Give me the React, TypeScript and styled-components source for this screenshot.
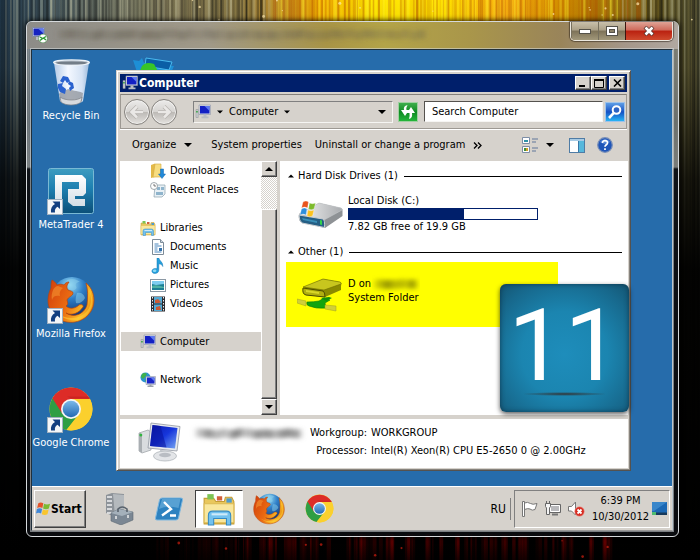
import React from "react";
import styled, { createGlobalStyle, css } from "styled-components";

const FACE = "#d6d2cc";
const NAVY = "#001f6b";
const DESKTOP = "#266cab";
const UI_FONT = '"DejaVu Sans Condensed", "Noto Sans", sans-serif';

const GlobalStyle = createGlobalStyle`
  *, *::before, *::after { box-sizing: border-box; }
  body { margin: 0; background: #000; font-family: ${UI_FONT}; font-size: 11px; line-height: 14px; color: #000; }
  button, input { font: inherit; color: inherit; }
  button { padding: 0; cursor: pointer; }
  a { color: inherit; text-decoration: none; }
  svg { display: block; flex: none; }
`;

const raised = css`
  border: 1px solid;
  border-color: #fff #404040 #404040 #fff;
  box-shadow: inset -1px -1px 0 #808080;
  background: ${FACE};
`;

/* ---------- wallpaper ---------- */

const WallpaperSvg = styled.svg`
  position: absolute;
  inset: 0;
  width: 100%;
  height: 100%;
`;

const noise = (n: number) => {
  const v = Math.sin(n * 127.1 + 11.7) * 43758.5453;
  return v - Math.floor(v);
};

function Wallpaper() {
  const stripes = Array.from({ length: 350 }, (_, i) => ({
    x: i * 2 + noise(i) * 2,
    w: 1 + noise(i + 900) * 2,
    dark: noise(i + 400) > 0.42,
    o: 0.08 + noise(i + 70) * 0.34,
  }));
  const glow = Array.from({ length: 130 }, (_, i) => ({
    x: 150 + noise(i + 5) * 460,
    w: 1 + noise(i + 30) * 4,
    o: 0.1 + noise(i + 60) * 0.35,
  }));
  const sparks = Array.from({ length: 26 }, (_, i) => ({
    x: 150 + noise(i + 200) * 545,
    y: i % 3 ? noise(i + 300) * 20 : 537 + noise(i + 310) * 20,
    r: 0.6 + noise(i + 320),
  }));
  return (
    <WallpaperSvg viewBox="0 0 700 560" preserveAspectRatio="none" aria-hidden="true">
      <defs>
        <linearGradient id="sky" x1="0" x2="1">
          <stop offset="0" stopColor="#1f3445" />
          <stop offset=".05" stopColor="#3d5360" />
          <stop offset=".13" stopColor="#5d665f" />
          <stop offset=".25" stopColor="#857b56" />
          <stop offset=".34" stopColor="#8b7a45" />
          <stop offset=".41" stopColor="#c48b1c" />
          <stop offset=".46" stopColor="#f5b400" />
          <stop offset=".53" stopColor="#ffe800" />
          <stop offset=".64" stopColor="#ffdf00" />
          <stop offset=".72" stopColor="#f8ae10" />
          <stop offset=".8" stopColor="#d89600" />
          <stop offset=".88" stopColor="#98700c" />
          <stop offset=".95" stopColor="#5f5522" />
          <stop offset="1" stopColor="#5a5738" />
        </linearGradient>
        <linearGradient id="night" x1="0" x2="0" y1="0" y2="1">
          <stop offset="0" stopOpacity="0" />
          <stop offset=".12" stopOpacity=".12" />
          <stop offset=".32" stopOpacity=".75" />
          <stop offset=".48" stopOpacity=".96" />
          <stop offset="1" stopOpacity="1" />
        </linearGradient>
        <linearGradient id="ember" x1="0" x2="0" y1="0" y2="1">
          <stop offset="0" stopColor="#a80000" />
          <stop offset="1" stopColor="#300000" />
        </linearGradient>
      </defs>
      <rect width="700" height="560" fill="url(#sky)" />
      {stripes.map((s, i) => (
        <rect
          key={i}
          x={s.x}
          width={s.w}
          height="560"
          opacity={s.o}
          fill={s.dark ? (s.x > 270 && s.x < 640 ? "#b04c00" : "#0a0c0c") : s.x > 270 && s.x < 620 ? "#ffef30" : "#c8c8a8"}
        />
      ))}
      <rect width="700" height="560" fill="url(#night)" />
      {glow.map((s, i) => (
        <rect key={i} x={s.x} y="534" width={s.w} height="26" opacity={s.o * (s.x < 230 ? 0.35 : 0.85)} fill="url(#ember)" />
      ))}
      {sparks.map((s, i) => (
        <circle key={i} cx={s.x} cy={s.y} r={s.r} fill={s.y > 100 ? "#d02010" : "#ffe9b0"} opacity=".7" />
      ))}
    </WallpaperSvg>
  );
}

/* ---------- shared artwork ---------- */

type IconProps = { size?: number };

function MonitorIcon({ size = 16 }: IconProps) {
  return (
    <svg width={size} height={size} viewBox="0 0 16 16" aria-hidden="true">
      <path d="M1 5.500h2.200v8H1z" fill="#c9cdd0" stroke="#8b8f92" strokeWidth=".5" />
      <path d="M1.200 7h1.500v1.500H1.200z" fill="#2fa23a" />
      <path d="M4 1h11.500v9.500H4z" fill="#d7dbe2" stroke="#8e96a8" strokeWidth=".6" />
      <path d="M5 2h9.500v7.500H5z" fill="#1320c4" />
      <path d="M9.500 2h5v5z" fill="#5c78f0" />
      <path d="M8.500 10.500h3v2h2v1.800h-7v-1.800h2z" fill="#b8bcc4" />
    </svg>
  );
}

function BigMonitorIcon() {
  return (
    <svg width="44" height="42" viewBox="0 0 44 42" aria-hidden="true">
      <defs>
        <linearGradient id="screen" x1="0" x2="1" y1="0" y2="1">
          <stop offset="0" stopColor="#0b18a8" />
          <stop offset=".5" stopColor="#1636dc" />
          <stop offset="1" stopColor="#79a7f2" />
        </linearGradient>
      </defs>
      <path d="M1 11l9-3 3 2v18l-9 3-3-2z" fill="#d9dcdf" stroke="#9a9fa3" strokeWidth=".7" />
      <path d="M1 11l3 1v19l-3-2z" fill="#a9aeb2" />
      <circle cx="2.800" cy="13" r="1.500" fill="#31b440" />
      <path d="M13 1l29 3.500L39 29 10 26z" fill="#e8eaed" stroke="#9298a2" strokeWidth=".8" />
      <path d="M14.500 3l25 3-2.500 20.500L12 24z" fill="url(#screen)" />
      <path d="M14.500 3l8 1 6 21.500L12 24z" fill="#08129a" opacity=".55" />
      <path d="M22 28l8 1-1 5h-6z" fill="#bfc3c8" />
      <ellipse cx="27" cy="34" rx="11.500" ry="5" fill="#e3e5e8" stroke="#a8adb3" strokeWidth=".7" />
      <ellipse cx="27" cy="33" rx="6" ry="2.200" fill="#b9bdc3" />
    </svg>
  );
}

function FirefoxIcon({ size = 48 }: IconProps) {
  return (
    <svg width={size} height={size} viewBox="0 0 48 48" aria-hidden="true">
      <defs>
        <radialGradient id="globe" cx=".45" cy=".2" r=".85">
          <stop offset="0" stopColor="#9be0f6" />
          <stop offset=".4" stopColor="#2f7fc8" />
          <stop offset="1" stopColor="#0b2a68" />
        </radialGradient>
        <linearGradient id="fox" x1="0" x2="1" y1=".1" y2=".5">
          <stop offset="0" stopColor="#d2400c" />
          <stop offset=".5" stopColor="#ea6a12" />
          <stop offset=".85" stopColor="#fab825" />
          <stop offset="1" stopColor="#e88a12" />
        </linearGradient>
      </defs>
      <circle cx="25" cy="21" r="20" fill="url(#globe)" />
      <path d="M20 4c5-2 9-1 13 2-3 0-5 2-4 4 2 3-2 5-5 4-3-2-6-4-4-10zM30 17c4-1 7 1 8 5-2 4-6 6-9 5-1-4 0-7 1-10z" fill="#8bd0ec" opacity=".5" />
      <path d="M39 7c9 7 11 22 3 31-8 10-24 11-33 3C0 34-1 22 4 12c0-3 0-5 1-8 2 1 4 3 5 5 2-1 5-1 7 0 1-2 3-3 5-3-2 3-3 5-1 8 2 1 5 1 5 3 0 3-5 4-6 7 1 3 1 5-1 6 4 4 10 2 13-1 2-1 5 0 4 2-4 6-11 9-17 6 7 5 18 2 21-8 1-8 1-15-1-22z" fill="url(#fox)" stroke="#b8430c" strokeWidth=".7" />
      <path d="M41 12c5 9 4 20-4 26-8 6-19 5-27-1 9 9 24 10 31 1 7-8 5-19 0-26z" fill="#ffd93e" opacity=".5" />
      <path d="M6 14c1-2 3-4 5-4l5 2c-3 2-4 5-3 8-4-1-7 0-8 4-1-4 0-7 1-10z" fill="#f18a2c" opacity=".7" />
    </svg>
  );
}

function ChromeIcon({ size = 48 }: IconProps) {
  return (
    <svg width={size} height={size} viewBox="0 0 48 48" aria-hidden="true">
      <defs>
        <linearGradient id="hub" x1="0" x2="0" y1="0" y2="1">
          <stop offset="0" stopColor="#7bb9e9" />
          <stop offset="1" stopColor="#2168b4" />
        </linearGradient>
      </defs>
      <circle cx="24" cy="24" r="21.500" fill="#fbd22f" />
      <path d="M24 24L5.400 13.300A21.500 21.500 0 0 0 19.500 45l12-15.500z" fill="#2f9e44" />
      <path d="M24 14h19A21.500 21.500 0 0 0 5.400 13.300L15.500 29z" fill="#dd2c27" />
      <path d="M43 14H24l8.500 15-13 16A21.500 21.500 0 0 0 43 14z" fill="#fbd02d" />
      <path d="M24 13.500h19l-1-2H20z" fill="#a81616" opacity=".35" />
      <circle cx="24" cy="24" r="10" fill="#f6f6f6" />
      <circle cx="24" cy="24" r="8.300" fill="url(#hub)" />
    </svg>
  );
}

function RecycleBinIcon() {
  return (
    <svg width="48" height="48" viewBox="0 0 48 48" aria-hidden="true">
      <defs>
        <linearGradient id="bin" x1="0" x2="1">
          <stop offset="0" stopColor="#b4cae6" />
          <stop offset=".4" stopColor="#f4f8ff" />
          <stop offset=".8" stopColor="#d4e2f4" />
          <stop offset="1" stopColor="#9dbbdc" />
        </linearGradient>
      </defs>
      <path d="M7 5h35l-6 38c-3 4-19 4-23 0z" fill="url(#bin)" />
      <path d="M12 36c3-4 6-3 9-5 4 2 8 1 15 4l-1 8c-4 3-17 3-21 0z" fill="#8f9399" opacity=".75" />
      <path d="M13 39c5 4 18 4 22 0l-1 5c-4 4-16 4-20 0z" fill="#d8dadd" stroke="#7c8085" strokeWidth=".7" />
      <ellipse cx="24.500" cy="4.500" rx="17.800" ry="2.600" fill="#b4bdc7" stroke="#edf2f7" strokeWidth="1.400" />
      <ellipse cx="24.500" cy="5" rx="15.500" ry="1.600" fill="#737d88" />
      <g fill="#2a62cf">
        <path d="M13 23l3-5 5 1 2 4-3 2-2-3-2 3z" />
        <path d="M22 23l4 2 1 5-4 3-1-3 2-2-3-2z" />
        <path d="M11 26l5-1-1 3 4 3-1 5-5-2-2-4z" />
      </g>
    </svg>
  );
}

function MetaTraderIcon() {
  return (
    <svg width="48" height="48" viewBox="0 0 48 48" aria-hidden="true">
      <defs>
        <linearGradient id="mt" x1="0" x2="0" y1="0" y2="1">
          <stop offset="0" stopColor="#3e9cc0" />
          <stop offset=".45" stopColor="#1d7fb0" />
          <stop offset="1" stopColor="#0b4f78" />
        </linearGradient>
        <linearGradient id="mtMark" x1="0" x2="0" y1="0" y2="1">
          <stop offset="0" stopColor="#fff" />
          <stop offset="1" stopColor="#d2dde4" />
        </linearGradient>
      </defs>
      <rect x="1.500" y="1.500" width="45" height="45" rx="2" fill="url(#mt)" stroke="#79b9d4" />
      <path d="M8 8h27l4 4v14l-3 3h-8v3h10v7H26l-5-4V22h11v-7H15v25H8z" fill="url(#mtMark)" />
    </svg>
  );
}

const ShortcutSvg = styled.svg`
  position: absolute;
  left: 0;
  bottom: 0;
`;

function ShortcutArrow() {
  return (
    <ShortcutSvg width="16" height="16" viewBox="0 0 16 16" aria-hidden="true">
      <rect x=".5" y=".5" width="15" height="15" fill="#f4f6f8" stroke="#9fb0c0" />
      <path d="M5.500 2.500H13V10l-2.500-2.300c-2 1-3 3-2.500 5.800H4c-.5-4 .8-6.800 4-8.500z" fill="#123f80" />
    </ShortcutSvg>
  );
}

function HardDiskIcon() {
  return (
    <svg width="48" height="32" viewBox="0 0 48 32" aria-hidden="true">
      <defs>
        <linearGradient id="disk" x1="0" x2="1">
          <stop offset="0" stopColor="#f4f4f4" />
          <stop offset="1" stopColor="#a9acaf" />
        </linearGradient>
      </defs>
      <path d="M2 16L22 5l22 5q2 1 1.500 3v5L28 30 4 24q-3-2-2-8z" fill="#8e9295" />
      <path d="M2 16L22 5l22 5q2 1 1 2L27 22z" fill="url(#disk)" stroke="#c5c8ca" strokeWidth=".6" />
      <path d="M2 17l24 4q2 1 1.500 8.500L5 25q-3-2-3-8z" fill="#255f85" stroke="#c8ccd0" />
      <path d="M5 20l15 3v2L6 22z" fill="#3a90b8" />
      <path d="M23 22l2 .5v4.500l-2-.5z" fill="#34d24a" />
      <g stroke="#fff" strokeWidth=".3">
        <path d="M6 4q3-2 5.500 0l-1 6q-3-2-6 0z" fill="#e8541e" />
        <path d="M12.500 5q3 1.500 6 0L17 11q-3 1.500-5.500 0z" fill="#7dbb2c" />
        <path d="M4.500 11q3-2 5.500 0l-1 6q-3-2-6 0z" fill="#2d8fdc" />
        <path d="M11 12q3 1.500 6 0l-1.500 6q-3 1.500-5.500 0z" fill="#fbc21f" />
      </g>
    </svg>
  );
}

function NetworkDriveIcon() {
  return (
    <svg width="48" height="36" viewBox="0 0 48 36" aria-hidden="true">
      <path d="M6 11L26 2l17 3q2 1 1 4v4L28 20 8 18q-3-2-2-7z" fill="#8b8a00" />
      <path d="M6 10L26 2l17 3q2 1 1 2L27 13z" fill="#c8c61e" stroke="#6e6d00" strokeWidth=".6" />
      <path d="M6 11l20 3q2 1 2 6L9 18q-4-1-3-7z" fill="#b0af10" stroke="#4e4d00" strokeWidth="1" />
      <path d="M9 13l13 2v2L9 15z" fill="#d9d728" />
      <path d="M0 22l9 2v5l-9-3z" fill="#d0cf3a" stroke="#a3a21c" strokeWidth=".5" />
      <path d="M10 25q7 0 12-1l5-3 6 2-5 3 1 5q-10 1-17-2-3-1-2-4z" fill="#12a40e" stroke="#0a7d08" strokeWidth=".6" />
      <path d="M24 21l8-1 3 1-6 3z" fill="#0f8f0b" />
      <path d="M28 28l11 1v5l-11-2z" fill="#d0cf3a" stroke="#a3a21c" strokeWidth=".5" />
    </svg>
  );
}

function FolderLibIcon({ size = 16 }: IconProps) {
  return (
    <svg width={size} height={size} viewBox="0 0 32 32" aria-hidden="true">
      <path d="M2 6h9l2 3h8l1-4h6l2 4v21H2z" fill="#e9c75c" stroke="#c49c35" />
      <path d="M5 2h6v5H5z" fill="#7dc454" />
      <path d="M14 4h5v4h-5z" fill="#d2603c" />
      <path d="M23 6h5v4h-5z" fill="#4f9bcb" />
      <path d="M2 11h28v18H2z" fill="#f9e79e" stroke="#dcb952" />
      <path d="M6 22q0-4 4-4h13q4 0 4 4v9h-4v-6H11v6H6z" fill="#72c1ee" stroke="#358ac4" />
      <path d="M9 20h15v2H9z" fill="#cdeafa" />
    </svg>
  );
}

function DownloadsIcon() {
  return (
    <svg width="16" height="16" viewBox="0 0 16 16" aria-hidden="true">
      <path d="M1 2l4-1.500V14l-4 1z" fill="#e2b94a" />
      <path d="M5 1h6v13H3z" fill="#f7dd80" stroke="#d3a83c" strokeWidth=".6" />
      <path d="M10.500 6h3v5h2L12 15.500 8.500 11h2z" fill="#2189d8" stroke="#0f65b0" strokeWidth=".5" />
    </svg>
  );
}

function RecentIcon() {
  return (
    <svg width="16" height="16" viewBox="0 0 16 16" aria-hidden="true">
      <path d="M5 3h10v9l-3 3H4z" fill="#e8f0f5" stroke="#8ba0ad" strokeWidth=".7" />
      <path d="M7 5h3v3H7zM11 5h3v3h-3zM6 10h7v3H6z" fill="#8fb4cc" />
      <circle cx="4" cy="4" r="3.500" fill="#fff" stroke="#8b959c" strokeWidth=".8" />
      <path d="M4 2v2h2" fill="none" stroke="#444" strokeWidth=".7" />
    </svg>
  );
}

function DocumentIcon() {
  return (
    <svg width="16" height="16" viewBox="0 0 16 16" aria-hidden="true">
      <path d="M2.500.5h8l3 3v12h-11z" fill="#fff" stroke="#7e8c99" />
      <path d="M4.500 5h4M4.500 7h7M4.500 9h3M4.500 11h3M4.500 13h7" stroke="#4a86bd" />
      <path d="M9 9h3v3H9z" fill="#3572ab" />
      <path d="M10.500.5v3h3" fill="#cbd8e2" stroke="#7e8c99" />
    </svg>
  );
}

function MusicIcon() {
  return (
    <svg width="16" height="16" viewBox="0 0 16 16" aria-hidden="true">
      <path d="M7 0h1.800c.5 3 4.500 4 4 8.500-.8-1.800-2-2.500-4-2.700V12c0 2.500-2 3.500-4 3.500S1.500 14 2 12.500C2.700 10.500 5 10 7 10.800z" fill="#24a0dc" stroke="#1274b4" strokeWidth=".5" />
      <ellipse cx="4.600" cy="12.700" rx="1.800" ry="1.200" fill="#8cdaf6" />
    </svg>
  );
}

function PictureIcon() {
  return (
    <svg width="16" height="16" viewBox="0 0 16 16" aria-hidden="true">
      <rect x=".5" y="2.500" width="15" height="12" fill="#fff" stroke="#8b98a4" />
      <path d="M2 4h12v4H2z" fill="#7fcdf0" />
      <path d="M2 7l4 1 8-1v6H2z" fill="#1c7f96" />
      <path d="M2 9q4-2 12 1v1H2z" fill="#4fb1a5" />
    </svg>
  );
}

function VideoIcon() {
  return (
    <svg width="16" height="16" viewBox="0 0 16 16" aria-hidden="true">
      <rect x="1" y=".5" width="14" height="15" fill="#2b2b30" />
      <path d="M4 1h8v6.500H4zM4 8.500h8V15H4z" fill="#53a9d4" />
      <path d="M5 4l3-1 3 3-2 1H5zM6 11l4-1 1 4H6z" fill="#cc5a34" />
      <path d="M2.500 1v14M13.500 1v14" stroke="#eee" strokeDasharray="1.500 1.500" />
    </svg>
  );
}

function NetworkIcon() {
  return (
    <svg width="16" height="16" viewBox="0 0 16 16" aria-hidden="true">
      <circle cx="5.500" cy="5.500" r="5" fill="#2b93d0" />
      <path d="M2 2q3-2 5 0L5 5 3 7 1 5zM5 8l3-1v3H6z" fill="#3fb24a" />
      <path d="M6 4.500h9.500v8H6z" fill="#d7dbe2" stroke="#8089a0" strokeWidth=".5" />
      <path d="M7 5.500h7.500v6H7z" fill="#1a26c8" />
      <path d="M10.500 5.500h4v4z" fill="#5f7bf0" />
      <path d="M9.500 12.500h2v1h2V15h-6v-1.500h2z" fill="#9ca2ac" />
    </svg>
  );
}

function WindowsFlag({ size = 16 }: IconProps) {
  return (
    <svg width={size} height={size} viewBox="0 0 16 16" aria-hidden="true">
      <path d="M2.500 2.500Q5 .8 7.800 2.500L6.800 7.500Q4 5.900 1.200 7.500z" fill="#e5532a" />
      <path d="M8.600 3q3 1.700 6.400 0l-1.300 5q-3 1.700-6.200 0z" fill="#7cba33" />
      <path d="M1 8.400q2.800-1.600 5.600 0l-1.200 5Q2.800 11.700 0 13.400z" fill="#3d86d8" />
      <path d="M7.300 9q3.200 1.700 6.200 0l-1.300 5q-3 1.700-6 0z" fill="#f9c52c" />
    </svg>
  );
}

const Caret = ({ up = false, size = 7 }: { up?: boolean; size?: number }) => (
  <svg width={size} height={size} viewBox="0 0 8 8" aria-hidden="true">
    <path d={up ? "M0 6h8L4 2z" : "M0 2h8L4 6z"} />
  </svg>
);

/* Smudge that hides a private name. */
function Redacted({ width, color = "#777" }: { width: number; color?: string }) {
  const id = `smudge-${width}`;
  return (
    <svg width={width} height="14" aria-hidden="true" overflow="visible">
      <filter id={id} x="-10%" y="-60%" width="120%" height="220%">
        <feGaussianBlur stdDeviation="3 2" />
      </filter>
      <g filter={`url(#${id})`} fill={color}>
        {Array.from({ length: Math.floor(width / 8) }, (_, i) => (
          <rect key={i} x={i * 8 + 1} y={2 + noise(i + width) * 2} width={5 + noise(i) * 3} height="9" opacity={0.6 + noise(i + 3) * 0.4} />
        ))}
      </g>
    </svg>
  );
}

/* ---------- remote desktop frame ---------- */

const Page = styled.div`
  position: relative;
  min-height: 100vh;
  display: flex;
  padding: 21px 21px 23px 26px;
  overflow: hidden;
`;

const RemoteWindow = styled.section`
  position: relative;
  flex: 1;
  display: flex;
  flex-direction: column;
  min-width: 0;
  padding: 0 5px 5px 4px;
  border: 1px solid #d5d9dc;
  border-radius: 6px;
  background: linear-gradient(rgba(150, 156, 162, 0.65) 0, rgba(140, 148, 155, 0.65) 100px, rgba(200, 206, 210, 0.55) 145px, rgba(14, 18, 24, 0.9) 147px, rgba(10, 12, 16, 0.9) 100%);
  box-shadow: 0 0 5px 1px rgba(0, 0, 0, 0.8);
`;

const RemoteTitle = styled.header`
  display: flex;
  align-items: flex-start;
  gap: 10px;
  height: 27px;
  margin: 0 -5px 0 -4px;
  padding-left: 5px;
  border-radius: 5px 5px 0 0;
  background: linear-gradient(90deg, #8d8c88, #a09988 28%, #a89446 46%, #b3a448 55%, #a9964a 68%, #99845a 82%, #a5978a 92%, #b0a8a0);
  & > svg { margin-top: 5px; }
`;

const AeroButtons = styled.div`
  display: flex;
  margin-left: auto;
  margin-right: 5px;
  border: 1px solid #ece8df;
  border-top: 0;
  border-radius: 0 0 5px 5px;
  overflow: hidden;
  box-shadow: 0 0 1px 1px rgba(40, 30, 20, 0.55);
`;

const AeroButton = styled.button<{ $close?: boolean }>`
  display: grid;
  place-items: center;
  width: ${(p) => (p.$close ? 47 : 27)}px;
  height: 18px;
  border: 0;
  border-left: ${(p) => (p.$close ? "1px solid #3c1510" : "1px solid #77705e")};
  background: ${(p) =>
    p.$close
      ? "linear-gradient(#dfa396, #cf6a5b 45%, #ba2110 50%, #cf4a2e 100%)"
      : "linear-gradient(#c9c0ab, #aba087 45%, #7d7258 50%, #a2987a 100%)"};
`;

const Desktop = styled.main`
  flex: 1;
  display: flex;
  flex-direction: column;
  border: 1px solid #20303c;
  border-right-color: #bcc6cc;
  border-bottom-color: #9a9a9a;
  outline: 1px solid rgba(215, 222, 226, 0.55);
  background: ${DESKTOP};
`;

const Workspace = styled.div`
  position: relative;
  flex: 1;
  display: flex;
  min-height: 0;
`;

const ShortcutColumn = styled.ul`
  display: flex;
  flex-direction: column;
  gap: 43px;
  flex: none;
  width: 78px;
  margin: 0;
  padding: 8px 0 0;
  list-style: none;
`;

const Shortcut = styled.a`
  display: flex;
  flex-direction: column;
  align-items: center;
  gap: 3px;
  height: 66px;
  color: #fff;
  white-space: nowrap;
`;

const ShortcutArt = styled.span`
  position: relative;
`;

const HiddenShortcut = styled.svg`
  position: absolute;
  left: 100px;
  top: 6px;
`;

/* ---------- explorer ---------- */

const Explorer = styled.section`
  position: relative;
  flex: 1;
  display: flex;
  flex-direction: column;
  min-width: 0;
  margin: 20px 41px 15px 6px;
  padding: 2px;
  border: 1px solid;
  border-color: ${FACE} #55524e #55524e ${FACE};
  box-shadow: inset 1px 1px 0 #fff, inset -1px -1px 0 #87837d;
  background: ${FACE};
`;

const TitleBar = styled.header`
  display: flex;
  align-items: center;
  height: 18px;
  margin: 1px;
  padding: 0 2px;
  background: ${NAVY};
  color: #fff;
`;

const WindowTitle = styled.h1`
  flex: 1;
  margin: 0 0 0 1px;
  font-size: 12px;
  line-height: 18px;
`;

const ClassicButton = styled.button<{ $gap?: boolean }>`
  ${raised}
  display: grid;
  place-items: center;
  width: 16px;
  height: 14px;
  margin-left: ${(p) => (p.$gap ? 2 : 0)}px;
`;

const NavBar = styled.div`
  display: flex;
  align-items: center;
  height: 35px;
  margin: 1px 1px 0;
  padding: 0 1px 0 3px;
  border: 1px solid #9d9993;
  border-top-color: #84807a;
  box-shadow: 0 1px 0 #fff;
`;

const RoundButton = styled.button`
  width: 26px;
  height: 26px;
  margin-right: 1px;
  border: 1px solid #85827e;
  border-radius: 50%;
  background: linear-gradient(#ecebea, #d6d4d1 48%, #bdbab6 52%, #e4e2df);
  box-shadow: inset 0 0 0 1px #f2f1ef;
  display: grid;
  place-items: center;
`;

const AddressBar = styled.div`
  display: flex;
  align-items: center;
  gap: 6px;
  flex: 206 1 0;
  height: 22px;
  margin: 0 5px 0 15px;
  padding: 0 6px 0 1px;
  border: 1px solid;
  border-color: #808080 #f6f5f3 #f6f5f3 #808080;
  & > :last-child { margin-left: auto; }
`;

const GlyphButton = styled.button<{ $tone: "green" | "blue" }>`
  display: grid;
  place-items: center;
  width: 20px;
  height: 20px;
  border: 1px solid ${(p) => (p.$tone === "green" ? "#9fd0a0" : "#9dc2ea")};
  background: ${(p) =>
    p.$tone === "green"
      ? "linear-gradient(#3fae4c, #0f8a22 50%, #25b53a)"
      : "linear-gradient(#5d9de6, #1551c4 50%, #28b4f4)"};
`;

const SearchBox = styled.input`
  flex: 176 1 0;
  min-width: 0;
  height: 21px;
  margin: 0 2px 0 6px;
  padding: 0 7px;
  border: 1px solid;
  border-color: #55524e #f6f5f3 #f6f5f3 #55524e;
  border-radius: 0;
  background: #fff;
  &::placeholder { color: #000; opacity: 1; }
`;

const CommandBar = styled.div`
  display: flex;
  align-items: center;
  height: 32px;
  padding: 0 15px 0 13px;
`;

const Command = styled.button<{ $after?: number }>`
  display: flex;
  align-items: center;
  gap: 8px;
  margin-right: ${(p) => p.$after ?? 0}px;
  padding: 0;
  border: 0;
  background: none;
  white-space: nowrap;
`;

const Spacer = styled.span`
  flex: 1;
`;

const Body = styled.div`
  flex: 1;
  display: flex;
  min-height: 0;
  margin-left: 1px;
`;

const Tree = styled.nav`
  flex: none;
  width: 141px;
  background: #fff;
`;

const TreeRow = styled.a<{ $level: number; $selected?: boolean; $spaced?: boolean }>`
  display: flex;
  align-items: center;
  gap: 4px;
  height: 19px;
  margin-top: ${(p) => (p.$spaced ? 19 : 0)}px;
  margin-left: 1px;
  padding-left: ${(p) => 9 + p.$level * 10}px;
  background: ${(p) => (p.$selected ? FACE : "transparent")};
`;

const ScrollBar = styled.div`
  display: flex;
  flex-direction: column;
  width: 16px;
  background: repeating-conic-gradient(#fff 0 25%, ${FACE} 0 50%) 0 0 / 2px 2px;
`;

const ScrollButton = styled.button`
  ${raised}
  display: grid;
  place-items: center;
  width: 16px;
  height: 16px;
`;

const Thumb = styled.div`
  ${raised}
  flex: 1;
  margin-top: 32px;
`;

const Contents = styled.div`
  flex: 1;
  min-width: 0;
  margin-left: 3px;
  padding: 8px 6px 0;
  background: #fff;
`;

const GroupHeading = styled.h2`
  display: flex;
  align-items: center;
  gap: 4px;
  margin: 0;
  padding-left: 2px;
  font-size: 11px;
  font-weight: 400;
  line-height: 14px;
  &::after {
    content: "";
    flex: 1;
    height: 1px;
    margin-left: 2px;
    background: #000;
  }
`;

const Drive = styled.a<{ $marked?: boolean }>`
  display: flex;
  align-items: center;
  gap: 3px;
  width: 81%;
  height: ${(p) => (p.$marked ? 65 : 62)}px;
  margin-top: ${(p) => (p.$marked ? 3 : 0)}px;
  padding-left: 11px;
  background: ${(p) => (p.$marked ? "#ff0" : "transparent")};
`;

const DriveText = styled.span<{ $lifted?: boolean }>`
  display: flex;
  flex-direction: column;
  flex: 1;
  padding-bottom: ${(p) => (p.$lifted ? 8 : 0)}px;
`;

const NameLine = styled.span`
  display: flex;
  gap: 4px;
`;

const Capacity = styled.span`
  display: block;
  width: 190px;
  height: 12px;
  border: 1px solid ${NAVY};
  background: linear-gradient(90deg, ${NAVY} 61%, #fff 61%);
`;

const Details = styled.footer`
  display: flex;
  align-items: flex-start;
  height: 49px;
  margin: 4px 0 0 1px;
  padding: 3px 0 0 18px;
  background: #fff;
`;

const MachineName = styled.div`
  margin: 4px 1px 0 14px;
`;

const Facts = styled.dl`
  display: grid;
  grid-template-columns: 60px auto;
  gap: 4px;
  margin: 4px 0 0;
  white-space: nowrap;
  & dt { text-align: right; justify-self: end; }
  & dd { margin: 0; }
`;

const StepBadge = styled.div`
  position: absolute;
  right: 1px;
  bottom: 58px;
  width: 129px;
  height: 128px;
  border-radius: 6px;
  background: radial-gradient(circle at 50% 55%, #1e8dbb 0, #1b85b0 45%, #17688c 80%, #145572 100%);
  box-shadow: 0 2px 5px rgba(0, 0, 0, 0.65), inset 0 0 5px rgba(10, 40, 60, 0.7);
  color: #fff;
  font-family: Roboto, "Open Sans", sans-serif;
  font-size: 100px;
  line-height: 124px;
  text-align: center;
  &::after {
    content: "";
    position: absolute;
    left: 22px;
    right: 22px;
    bottom: 16px;
    height: 4px;
    background: radial-gradient(closest-side, #333, transparent);
  }
`;

/* ---------- taskbar ---------- */

const Taskbar = styled.footer`
  display: flex;
  align-items: center;
  height: 44px;
  padding: 0 2px;
  border-top: 1px solid #fff;
  background: ${FACE};
`;

const StartButton = styled.button`
  ${raised}
  display: flex;
  align-items: center;
  width: 52px;
  height: 38px;
  padding-left: 1px;
  font-size: 12px;
  font-weight: 700;
`;

const Pinned = styled.div`
  display: flex;
  align-items: center;
  margin-left: 9px;
`;

const PinnedButton = styled.button<{ $active?: boolean }>`
  display: grid;
  place-items: center;
  width: 48px;
  height: 38px;
  margin-right: 2px;
  border: 1px solid;
  border-color: ${(p) => (p.$active ? "#404040 #fff #fff #404040" : "transparent")};
  background: ${(p) => (p.$active ? "#fff" : "transparent")};
`;

const Language = styled.button`
  height: 22px;
  margin-left: auto;
  padding-right: 4px;
  border: 0;
  border-right: 1px solid #808080;
  background: none;
  font-size: 12px;
`;

const Tray = styled.div`
  display: flex;
  align-items: center;
  gap: 7px;
  height: 38px;
  margin-left: 3px;
  padding: 0 2px 0 6px;
  border: 1px solid;
  border-color: #808080 #fff #fff #808080;
`;

const Clock = styled.time`
  line-height: 16px;
  text-align: center;
  margin-right: -4px;
`;

const treeItems = [
  { label: "Downloads", icon: <DownloadsIcon />, level: 2 },
  { label: "Recent Places", icon: <RecentIcon />, level: 2 },
  { label: "Libraries", icon: <FolderLibIcon />, level: 1, spaced: true },
  { label: "Documents", icon: <DocumentIcon />, level: 2 },
  { label: "Music", icon: <MusicIcon />, level: 2 },
  { label: "Pictures", icon: <PictureIcon />, level: 2 },
  { label: "Videos", icon: <VideoIcon />, level: 2 },
  { label: "Computer", icon: <MonitorIcon />, level: 1, spaced: true, selected: true },
  { label: "Network", icon: <NetworkIcon />, level: 1, spaced: true },
];

const shortcuts = [
  { label: "Recycle Bin", icon: <RecycleBinIcon />, linked: false },
  { label: "MetaTrader 4", icon: <MetaTraderIcon />, linked: true },
  { label: "Mozilla Firefox", icon: <FirefoxIcon />, linked: true },
  { label: "Google Chrome", icon: <ChromeIcon />, linked: true },
];

function ExplorerWindow() {
  return (
    <Explorer aria-label="Computer">
      <TitleBar>
        <MonitorIcon />
        <WindowTitle>Computer</WindowTitle>
        <ClassicButton aria-label="Minimize">
          <svg width="10" height="9"><path d="M1 6h6v2H1z" /></svg>
        </ClassicButton>
        <ClassicButton aria-label="Maximize">
          <svg width="10" height="9"><path d="M.5 1h9M.5 .5v8h9v-8" fill="none" stroke="#000" /><path d="M0 0h10v2H0z" /></svg>
        </ClassicButton>
        <ClassicButton aria-label="Close" $gap>
          <svg width="9" height="8"><path d="M1 .5l7 7M8 .5l-7 7" stroke="#000" strokeWidth="1.600" /></svg>
        </ClassicButton>
      </TitleBar>
      <NavBar>
        <RoundButton aria-label="Back">
          <svg width="16" height="14" viewBox="0 0 16 14"><path d="M8 1.500L2.500 7 8 12.500M3 7h11" fill="none" stroke="#b5b2ae" strokeWidth="4" /><path d="M8 1.500L2.500 7 8 12.500M3 7h11" fill="none" stroke="#eae8e6" strokeWidth="2.600" /></svg>
        </RoundButton>
        <RoundButton aria-label="Forward">
          <svg width="16" height="14" viewBox="0 0 16 14"><path d="M8 1.500L13.500 7 8 12.500M13 7H2" fill="none" stroke="#b5b2ae" strokeWidth="4" /><path d="M8 1.500L13.500 7 8 12.500M13 7H2" fill="none" stroke="#eae8e6" strokeWidth="2.600" /></svg>
        </RoundButton>
        <AddressBar>
          <MonitorIcon />
          <Caret size={6} />
          <span>Computer</span>
          <Caret size={6} />
          <Caret size={8} />
        </AddressBar>
        <GlyphButton $tone="green" aria-label="Refresh">
          <svg width="18" height="14" viewBox="0 0 18 14"><path d="M8.500 0Q4 1 5 5H2l4 6 4-6H7.500Q7 2.500 8.500 0zM10 14q4-1 3-6h3l-4-6-4 6h2.500Q11 11 10 14z" fill="#fff" /></svg>
        </GlyphButton>
        <SearchBox aria-label="Search Computer" placeholder="Search Computer" />
        <GlyphButton $tone="blue" aria-label="Search">
          <svg width="16" height="16" viewBox="0 0 16 16"><circle cx="9.500" cy="6" r="3.800" fill="#2d63c4" stroke="#fff" strokeWidth="2" /><path d="M6.800 8.800L2 14" stroke="#fff" strokeWidth="2.600" /></svg>
        </GlyphButton>
      </NavBar>
      <CommandBar>
        <Command $after={19}>Organize <Caret size={8} /></Command>
        <Command $after={13}>System properties</Command>
        <Command $after={8}>Uninstall or change a program</Command>
        <Command aria-label="More commands">
          <svg width="9" height="7"><path d="M1 .5l3 3-3 3M5 .5l3 3-3 3" fill="none" stroke="#000" strokeWidth="1.300" /></svg>
        </Command>
        <Spacer />
        <Command aria-label="Change your view" $after={15}>
          <svg width="16" height="16" viewBox="0 0 16 16">
            <path d="M.5.500h7v6h-7zM.5 9.500h7v6h-7z" fill="#fff" stroke="#7d8ea6" />
            <path d="M2 3h4v2H2z" fill="#2e93a8" /><path d="M2 11h2v3H2z" fill="#3f8f3a" /><path d="M4 11h2v3H4z" fill="#d0a12c" />
            <path d="M10 2h6M10 5h4M10 11h6M10 14h4" stroke="#61779a" />
          </svg>
          <Caret size={8} />
        </Command>
        <Command aria-label="Show the preview pane" $after={12}>
          <svg width="16" height="15" viewBox="0 0 16 15">
            <rect x=".5" y=".5" width="15" height="14" fill="#fff" stroke="#4f7ca5" />
            <path d="M1 1h14v2H1z" fill="#a8cbe4" /><path d="M10 3h5v11h-5z" fill="#57b8dc" /><path d="M9.500 3v11" stroke="#3877a6" />
          </svg>
        </Command>
        <Command aria-label="Help">
          <svg width="16" height="16" viewBox="0 0 16 16">
            <circle cx="8" cy="8" r="7.300" fill="#1f55b8" stroke="#7a90b8" strokeWidth="1.200" />
            <path d="M3 5a6 6 0 0 1 10 0q-5 4-10 0z" fill="#7da7ea" opacity=".6" />
            <path d="M5.500 6c0-3.500 5.200-3 5 0C10.500 7.800 8 7.800 8 9.800M8 11.300v1.700" fill="none" stroke="#fff" strokeWidth="1.700" />
          </svg>
        </Command>
      </CommandBar>
      <Body>
        <Tree aria-label="Folders">
          {treeItems.map((t) => (
            <TreeRow key={t.label} href="#" $level={t.level} $selected={t.selected} $spaced={t.spaced}>
              {t.icon}
              {t.label}
            </TreeRow>
          ))}
        </Tree>
        <ScrollBar>
          <ScrollButton aria-label="Scroll up"><Caret up size={8} /></ScrollButton>
          <Thumb />
          <ScrollButton aria-label="Scroll down"><Caret size={8} /></ScrollButton>
        </ScrollBar>
        <Contents>
          <GroupHeading><Caret up size={6} />Hard Disk Drives (1)</GroupHeading>
          <Drive href="#">
            <HardDiskIcon />
            <DriveText>
              <span>Local Disk (C:)</span>
              <Capacity role="img" aria-label="61% used" />
              <span>7.82 GB free of 19.9 GB</span>
            </DriveText>
          </Drive>
          <GroupHeading><Caret up size={6} />Other (1)</GroupHeading>
          <Drive href="#" $marked>
            <NetworkDriveIcon />
            <DriveText $lifted>
              <NameLine>D on <Redacted width={40} color="#8f8f00" /></NameLine>
              <span>System Folder</span>
            </DriveText>
          </Drive>
        </Contents>
      </Body>
      <Details>
        <BigMonitorIcon />
        <MachineName><Redacted width={110} color="#888" /></MachineName>
        <Facts>
          <dt>Workgroup:</dt><dd>WORKGROUP</dd>
          <dt>Processor:</dt><dd>Intel(R) Xeon(R) CPU E5-2650 0 @ 2.00GHz</dd>
        </Facts>
      </Details>
      <StepBadge>11</StepBadge>
    </Explorer>
  );
}

function TaskbarStrip() {
  return (
    <Taskbar>
      <StartButton><WindowsFlag size={15} />Start</StartButton>
      <Pinned>
        <PinnedButton aria-label="Server Manager">
          <svg width="30" height="32" viewBox="0 0 30 32">
            <path d="M2 2l6-2 12 1v20l-9 3-9-4z" fill="#8d9399" />
            <path d="M9 1l11 1v18l-9 3z" fill="#b4b9bd" />
            <path d="M3 4h5M3 8h5M3 12h5M3 16h5M3 20h5" stroke="#f0f1f2" strokeWidth="1.500" />
            <path d="M7 20l8-4 14 3v8l-12 5-10-4z" fill="#7b8793" stroke="#5e6974" strokeWidth=".6" />
            <path d="M7 20l8-4 14 3-11 4z" fill="#a4b0ba" />
            <path d="M14 19v-3q4-4 9 0v3" fill="none" stroke="#59626c" strokeWidth="1.600" />
            <path d="M12 23v3M24 22v3" stroke="#eee" strokeWidth="1.500" />
          </svg>
        </PinnedButton>
        <PinnedButton aria-label="PowerShell">
          <svg width="28" height="24" viewBox="0 0 28 24">
            <path d="M7 1h19q2 0 1.500 2l-4 18q-.5 2-2.500 2H2q-2 0-1.500-2l4-18Q5 1 7 1z" fill="#2d82c0" stroke="#7fb8df" />
            <path d="M7 2h18.500l-2 9Q12 8 4 12z" fill="#74b5e0" opacity=".6" />
            <path d="M9 5l7 7-9 6.500M15 18.500h6" fill="none" stroke="#fff" strokeWidth="2.400" />
          </svg>
        </PinnedButton>
        <PinnedButton aria-label="Windows Explorer" $active>
          <FolderLibIcon size={34} />
        </PinnedButton>
        <PinnedButton aria-label="Mozilla Firefox"><FirefoxIcon size={32} /></PinnedButton>
        <PinnedButton aria-label="Google Chrome"><ChromeIcon size={31} /></PinnedButton>
      </Pinned>
      <Language>RU</Language>
      <Tray>
        <svg width="17" height="16" viewBox="0 0 17 16" aria-hidden="true">
          <path d="M1.500.5h2v15h-2z" fill="#fff" stroke="#777" /><path d="M3.500 2q3-1.500 6 .5 2 1.500 6.500 0l-2 6q-3 1.500-5-.5-2-1-5.500.5z" fill="#fff" stroke="#777" />
        </svg>
        <svg width="16" height="16" viewBox="0 0 16 16" aria-hidden="true">
          <path d="M4.500 3.500h11v8h-11z" fill="#b9b9bc" stroke="#666" /><path d="M5.500 4.500h9v6h-9z" fill="none" stroke="#fff" /><path d="M7 13.500h6" stroke="#777" strokeWidth="2" />
          <path d="M.5 2.500h5v3l-1 1.500v6.500h-3V7l-1-1.500z" fill="#f4f4f4" stroke="#666" /><path d="M1.500 0v3M4.500 0v3" stroke="#666" />
        </svg>
        <svg width="17" height="16" viewBox="0 0 17 16" aria-hidden="true">
          <path d="M.5 5.500h3l4-4.500v13l-4-4h-3z" fill="#fff" stroke="#777" />
          <circle cx="11.500" cy="10.500" r="4.800" fill="#d62b20" stroke="#f0a49c" strokeWidth=".6" /><path d="M9.500 8.500l4 4M13.500 8.500l-4 4" stroke="#fff" strokeWidth="1.800" />
        </svg>
        <Clock>6:39 PM<br />10/30/2012</Clock>
        <svg width="15" height="13" viewBox="0 0 15 13" aria-hidden="true">
          <path d="M0 0h15v13H0z" fill="#1c68b4" /><path d="M0 0h15L2 9H0z" fill="#4d9bd8" opacity=".6" /><path d="M0 10.500h15V13H0z" fill="#173a5c" /><path d="M0 10h4v3H0z" fill="#4dbb70" />
        </svg>
      </Tray>
    </Taskbar>
  );
}

export default function App() {
  return (
    <Page>
      <GlobalStyle />
      <Wallpaper />
      <RemoteWindow aria-label="Remote desktop">
        <RemoteTitle>
          <svg width="16" height="16" viewBox="0 0 16 16" aria-hidden="true">
            <path d="M.5.500h12v9H.5z" fill="#d7dbe2" stroke="#8089a0" /><path d="M1.500 1.500h10v7h-10z" fill="#1522c0" /><path d="M6 1.500h5.500v5z" fill="#5f7bf0" />
            <path d="M4 10h5v3H4z" fill="#b8bcc4" /><circle cx="11" cy="11.500" r="4.400" fill="#fff" stroke="#3b8a3e" strokeWidth=".6" />
            <path d="M8 10l2.500 1.500L8 13.500M14 9.500l-2.500 1.500 2.500 2" fill="none" stroke="#2a9a32" strokeWidth="1.400" />
          </svg>
          <Redacted width={368} color="rgba(90,84,70,.45)" />
          <AeroButtons>
            <AeroButton aria-label="Minimize">
              <svg width="12" height="6"><rect x=".5" y="1.500" width="11" height="4" fill="#fff" stroke="#55524a" /></svg>
            </AeroButton>
            <AeroButton aria-label="Maximize">
              <svg width="12" height="10"><rect x=".5" y=".5" width="11" height="9" fill="#fff" stroke="#55524a" /><rect x="3.500" y="3.500" width="5" height="3" fill="#8c8269" stroke="#55524a" /></svg>
            </AeroButton>
            <AeroButton aria-label="Close" $close>
              <svg width="12" height="10" viewBox="0 0 12 10"><path d="M2 1l8 8M10 1L2 9" stroke="#56342f" strokeWidth="4" /><path d="M2.500 1.500l7 7M9.500 1.500l-7 7" stroke="#fff" strokeWidth="2.600" /></svg>
            </AeroButton>
          </AeroButtons>
        </RemoteTitle>
        <Desktop>
          <Workspace>
            <HiddenShortcut width="46" height="20" viewBox="0 0 46 20" aria-hidden="true">
              <path d="M1 4l6 1 3-3 2 5 30 3-4 9H6z" fill="#1d8fd6" /><path d="M14 2l26 4-3 8-24-4z" fill="#0a5ea6" stroke="#49b9ee" /><path d="M10 10q4-5 12-2l6 11H6z" fill="#38c528" />
            </HiddenShortcut>
            <ShortcutColumn>
              {shortcuts.map((s) => (
                <li key={s.label}>
                  <Shortcut href="#">
                    <ShortcutArt>{s.icon}{s.linked && <ShortcutArrow />}</ShortcutArt>
                    {s.label}
                  </Shortcut>
                </li>
              ))}
            </ShortcutColumn>
            <ExplorerWindow />
          </Workspace>
          <TaskbarStrip />
        </Desktop>
      </RemoteWindow>
    </Page>
  );
}
